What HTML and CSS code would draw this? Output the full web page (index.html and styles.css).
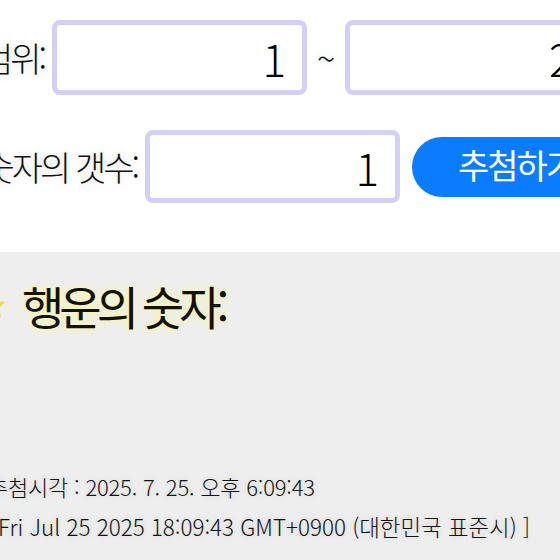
FILE: index.html
```html
<!DOCTYPE html>
<html lang="ko">
<head>
<meta charset="utf-8">
<link rel="stylesheet" href="styles.css">
</head>
<body>
<section class="form">
  <div class="row row-range">
    <div class="label label-range"><span>숫자 범위:</span></div>
    <div class="field">1</div>
    <span class="tilde">~</span>
    <div class="field field-max">20</div>
  </div>
  <div class="row row-count">
    <div class="label label-count"><span>숫자의 갯수:</span></div>
    <div class="field">1</div>
    <button class="draw">추첨하기</button>
  </div>
</section>
<section class="result">
  <h2 class="lucky"><span class="star"><svg viewBox="0 0 24 24" width="30" height="30"><path d="M12 2l3 7 7 .6-5.3 4.6 1.7 7.3L12 17.6 5.6 21.5l1.7-7.3L2 9.6 9 9z" fill="#f7d64a"/></svg></span><span class="lucky-text">행운의 숫자:</span></h2>
  <div class="numbers"></div>
  <p class="time time-local">추첨시각 : 2025. 7. 25. 오후 6:09:43</p>
  <p class="time time-full">[Fri Jul 25 2025 18:09:43 GMT+0900 (대한민국 표준시) ]</p>
</section>
</body>
</html>
```
FILE: styles.css
```css
html, body {
  margin: 0;
  padding: 0;
}
body {
  width: 560px;
  height: 560px;
  overflow: hidden;
  background: #ffffff;
  font-family: "Noto Sans CJK KR", "Noto Sans", sans-serif;
  font-weight: 300;
  color: #111;
}
.form {
  padding-top: 20px;
  height: 252px;
  box-sizing: border-box;
  display: flex;
  flex-direction: column;
  gap: 35px;
}
.row {
  display: flex;
  align-items: center;
}
.label {
  display: flex;
  justify-content: flex-end;
  white-space: nowrap;
  font-size: 34px;
  letter-spacing: -3px;
  text-shadow: 0 0 8px rgba(0,0,0,0.18);
}
.label-range { width: 44px; margin-right: 8px; }
.label-count { width: 137px; margin-right: 8px; }
.field {
  width: 255px;
  height: 75px;
  box-sizing: border-box;
  border: 5px solid #d3cff8;
  border-radius: 8px;
  background: #fff;
  display: flex;
  align-items: center;
  justify-content: flex-end;
  padding-right: 16px;
  font-size: 44px;
  color: #000;
  flex-shrink: 0;
}
.field-max { width: 272px; }
.row-count .field { height: 73px; }
.tilde {
  font-size: 34px;
  margin: 0 10px;
  text-shadow: 0 0 8px rgba(0,0,0,0.18);
}
.draw {
  margin-left: 12px;
  width: 210px;
  height: 60px;
  flex-shrink: 0;
  border: none;
  border-radius: 30px;
  background: #0a7cff;
  color: #fff;
  font-family: inherit;
  font-weight: 400;
  font-size: 34px;
  letter-spacing: -2px;
  text-align: left;
  padding: 0 0 4px 46px;
}
.result {
  background: #eeeeee;
  height: 308px;
  padding-top: 22px;
  box-sizing: border-box;
}
.lucky {
  margin: 0;
  display: flex;
  align-items: center;
  font-weight: 400;
  font-size: 46px;
  letter-spacing: -5px;
  height: 62px;
}
.star {
  margin-left: -22px;
  display: flex;
  width: 44px;
}
.lucky-text {
  text-shadow: 0 0 8px #f8f59a, 0 0 4px #faf7b0;
}
.numbers {
  height: 130px;
}
.time {
  margin: 0;
  height: 40px;
  display: flex;
  align-items: center;
  white-space: nowrap;
  font-weight: 300;
  text-shadow: 0 0 6px rgba(0,0,0,0.15);
}
.time-local {
  margin-left: -12px;
  font-size: 22px;
  letter-spacing: -0.2px;
}
.time-full {
  margin-left: -9px;
  font-size: 22.4px;
  letter-spacing: 0;
}
```
